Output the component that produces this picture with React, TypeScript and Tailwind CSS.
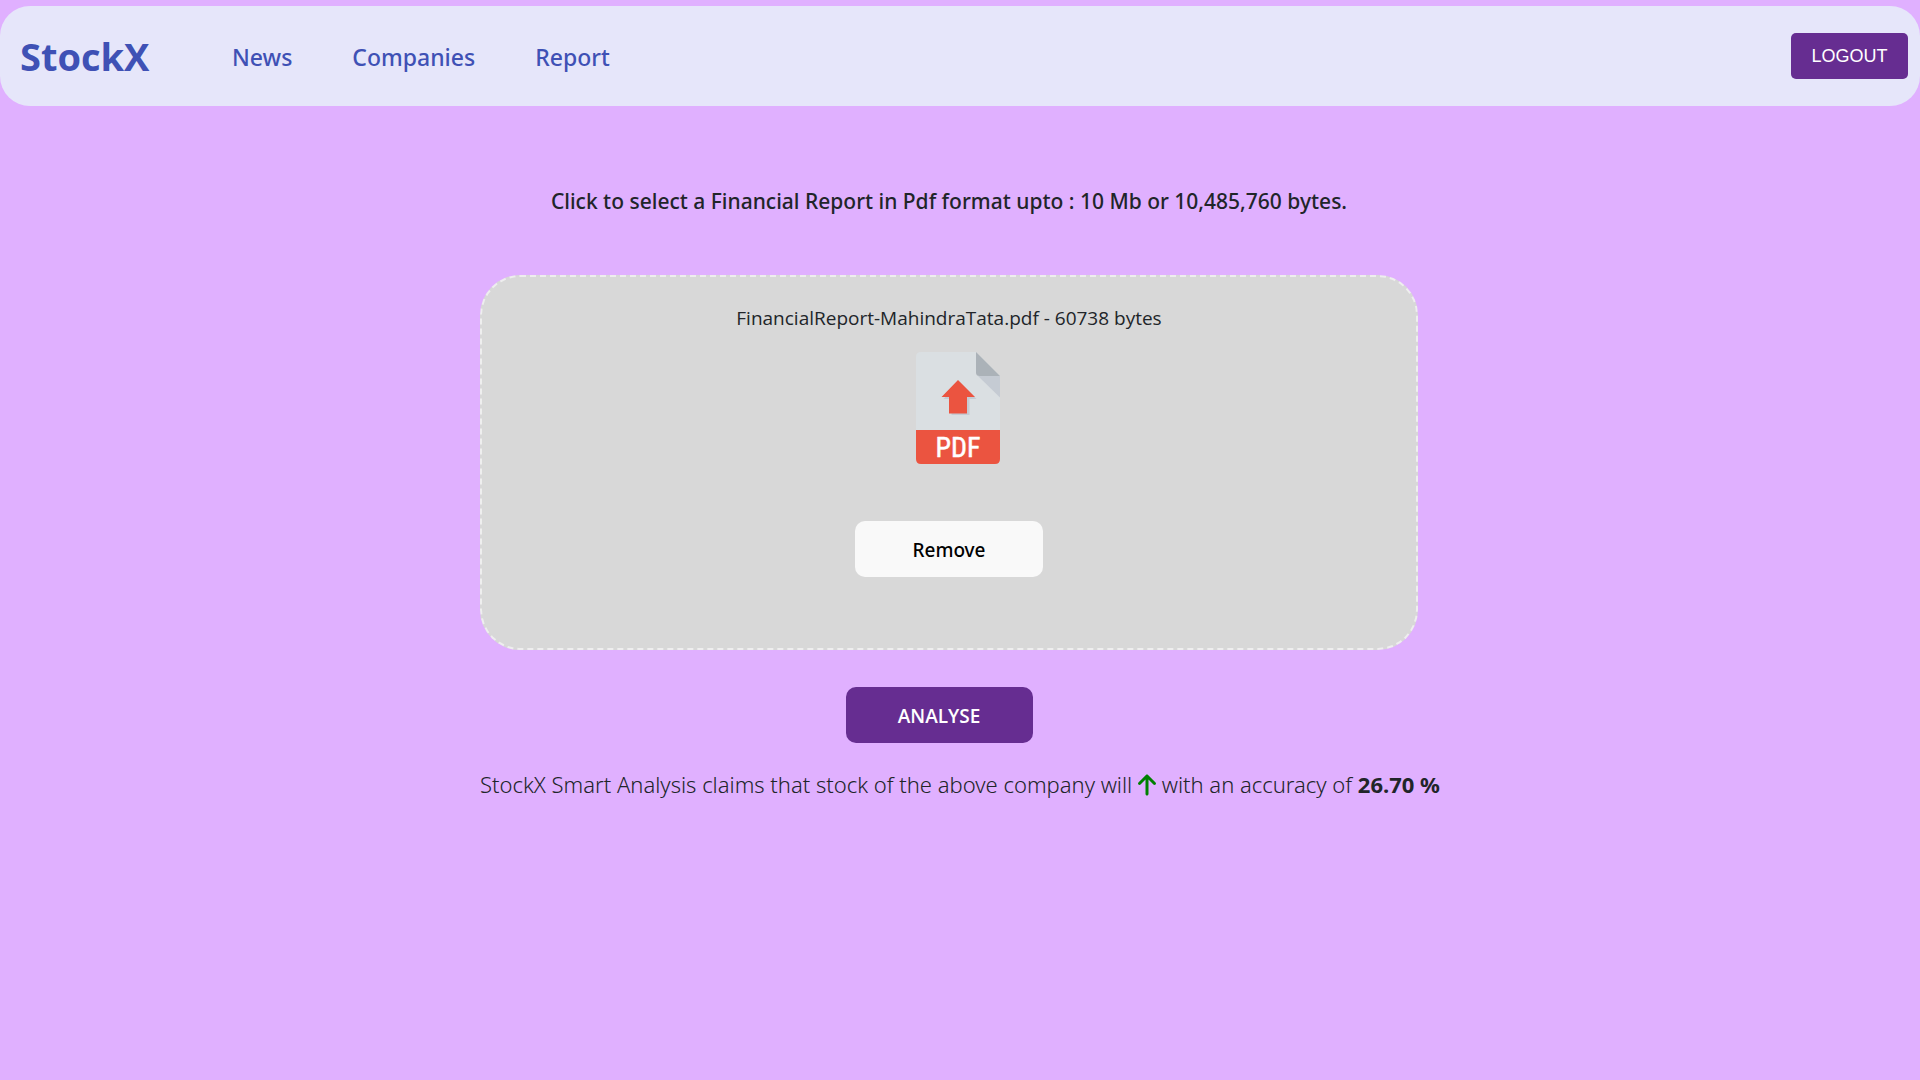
import { FaArrowUp } from "react-icons/fa6";

const links = ["News", "Companies", "Report"];

function Header() {
  return (
    <header className="mt-1.5 flex h-[100px] items-center rounded-[30px] bg-[#e6e6fa] pl-5 pr-3 text-[#3f51b5]">
      <a href="#home" className="w-[212px] text-[38px] font-bold leading-none">
        StockX
      </a>
      <nav className="flex grow gap-[60px] pt-0.5 font-['Noto_Sans','Open_Sans',sans-serif] text-[23px] font-medium">
        {links.map((name) => (
          <a key={name} href={"#" + name.toLowerCase()}>
            {name}
          </a>
        ))}
      </nav>
      <button
        type="button"
        className="h-[46px] w-[117px] rounded-[5px] bg-[#662d91] font-['Liberation_Sans',sans-serif] text-lg text-white"
      >
        LOGOUT
      </button>
    </header>
  );
}

function PdfIcon() {
  return (
    <svg viewBox="0 0 84 112" className="ml-[18px] mt-5 h-28 w-[84px]" role="img" aria-label="PDF file">
      <path d="M5 0H60L84 24V78H0V5Q0 0 5 0Z" fill="#dadfe2" />
      <path d="M62 24H84V45.500Z" fill="#c5cbd3" />
      <path d="M60 0L84 24H63.500Q60 24 60 20.500Z" fill="#abb2b8" />
      <path d="M44 30L60.500 47H53.500V63H35.500V47H27.500Z" fill="#c5cbd3" />
      <path d="M42 28L59 45H51V61.500H33V45H25.500Z" fill="#eb5440" />
      <path d="M0 78H84V107Q84 112 79 112H5Q0 112 0 107Z" fill="#eb5440" />
      <text
        x="42"
        y="105"
        textAnchor="middle"
        fill="#fff"
        stroke="#fff"
        strokeWidth="0.5"
        strokeLinejoin="round"
        className="font-['Roboto_Condensed','Liberation_Sans_Narrow',sans-serif] text-[28px]"
      >
        PDF
      </text>
    </svg>
  );
}

function Uploader() {
  return (
    <div className="mt-[59px] flex h-[375px] w-full flex-col items-center rounded-[40px] border-2 border-dashed border-[#eeeeee] bg-[#d8d8d8] pt-[27px]">
      <p className="text-[19px] leading-7">FinancialReport-MahindraTata.pdf - 60738 bytes</p>
      <PdfIcon />
      <button
        type="button"
        className="mt-[57px] h-14 w-[188px] rounded-[10px] bg-[#f9f9f9] pt-0.5 font-['Noto_Sans','Open_Sans',sans-serif] text-[19px] font-medium text-black"
      >
        Remove
      </button>
    </div>
  );
}

export default function App() {
  return (
    <div className="flow-root min-h-screen bg-[#e0b0ff] font-['Open_Sans',sans-serif] text-[#212529]">
      <Header />
      <main className="ml-[25%] mr-[502px] mt-20 flex flex-col items-center">
        <h1 className="whitespace-nowrap font-['Noto_Sans','Open_Sans',sans-serif] text-[21px] font-medium leading-[30px]">
          Click to select a Financial Report in Pdf format upto : 10 Mb or 10,485,760 bytes.
        </h1>
        <Uploader />
        <button
          type="button"
          className="mr-5 mt-[37px] h-14 w-[187px] rounded-[10px] bg-[#662d91] pt-0.5 text-[19px] font-semibold text-white"
        >
          ANALYSE
        </button>
        <p className="mt-[25px] self-start whitespace-nowrap font-['Noto_Sans','Open_Sans',sans-serif] text-[22px] font-light leading-8">
          StockX Smart Analysis claims that stock of the above company will{" "}
          <FaArrowUp className="inline h-6 w-[18px] align-[-4px] text-[#008000]" aria-label="rise" /> with an accuracy of{" "}
          <strong className="font-bold">26.70 %</strong>
        </p>
      </main>
    </div>
  );
}
